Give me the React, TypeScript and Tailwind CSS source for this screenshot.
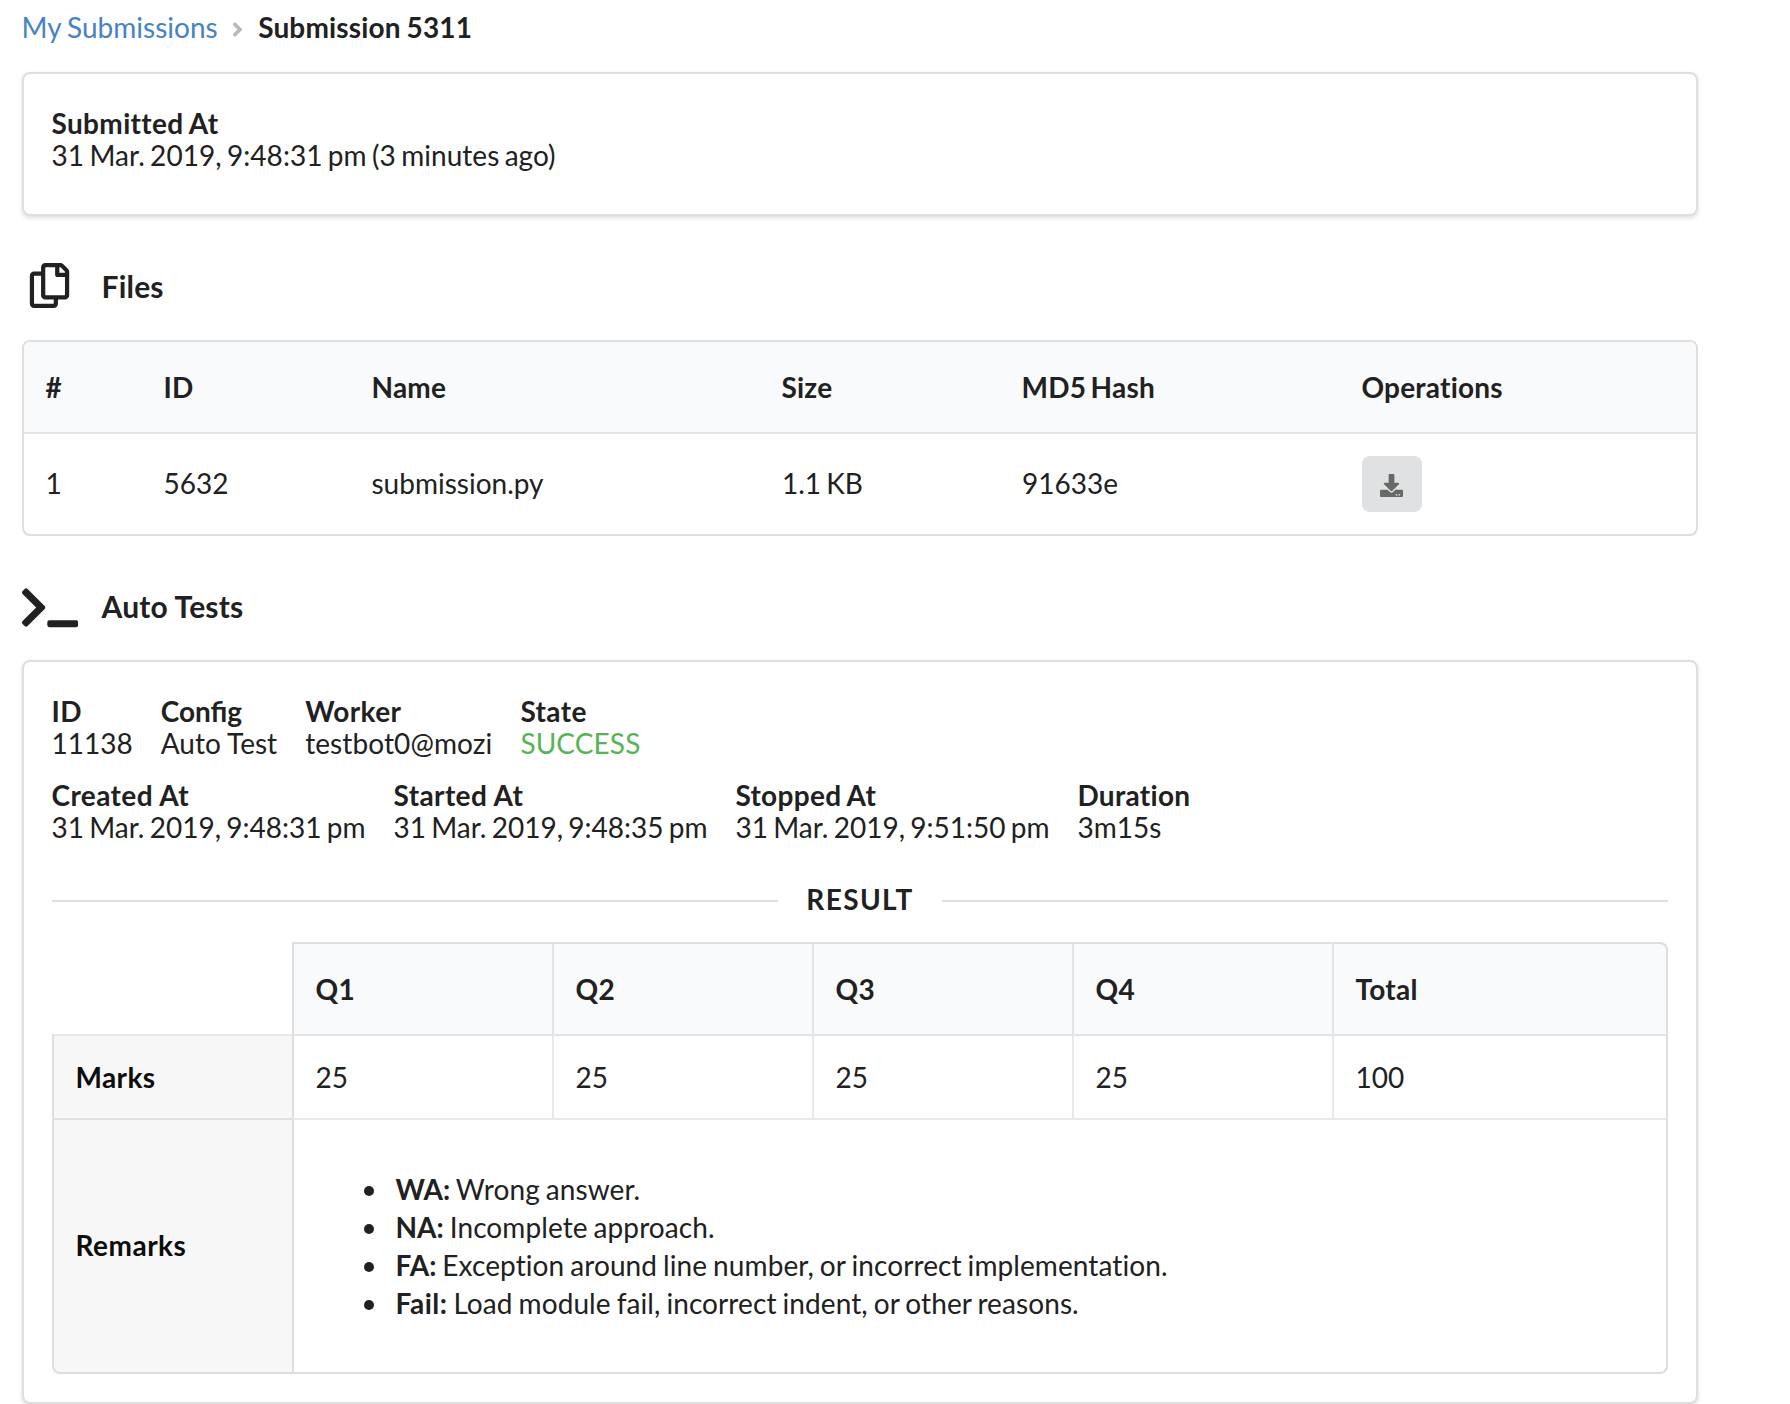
import type { ReactNode } from "react";
import { FaAngleRight, FaDownload, FaRegCopy } from "react-icons/fa";

const fileColumns = [
  { label: "#", width: "w-[120px]" },
  { label: "ID", width: "w-[208px]" },
  { label: "Name", width: "w-[410px]" },
  { label: "Size", width: "w-[240px]" },
  { label: "MD5 Hash", width: "w-[340px]" },
  { label: "Operations", width: "w-[358px]" },
];

const files = [{ index: 1, id: "5632", name: "submission.py", size: "1.1 KB", hash: "91633e" }];

const marks = [
  { label: "Q1", value: "25" },
  { label: "Q2", value: "25" },
  { label: "Q3", value: "25" },
  { label: "Q4", value: "25" },
  { label: "Total", value: "100" },
];

const remarks = [
  { code: "WA:", text: "Wrong answer." },
  { code: "NA:", text: "Incomplete approach." },
  { code: "FA:", text: "Exception around line number, or incorrect implementation." },
  { code: "Fail:", text: "Load module fail, incorrect indent, or other reasons." },
];

function TerminalIcon() {
  return (
    <svg viewBox="0 0 640 512" fill="currentColor" className="mt-[2.5px] h-[45px] w-[56.25px] shrink-0">
      <path d="M257.981 272.971L63.638 467.314c-9.373 9.373-24.569 9.373-33.941 0L7.029 444.647c-9.357-9.357-9.375-24.522-.04-33.901L161.011 256 6.99 101.255c-9.335-9.379-9.317-24.544.04-33.901l22.667-22.667c9.373-9.373 24.569-9.373 33.941 0L257.981 239.03c9.373 9.372 9.373 24.568 0 33.941zM640 456v-32c0-13.255-10.745-24-24-24H312c-13.255 0-24 10.745-24 24v32c0 13.255 10.745 24 24 24h304c13.255 0 24-10.745 24-24z" />
    </svg>
  );
}

function Field({
  label,
  children,
  labelClass = "tracking-[0.4px] [word-spacing:0px]",
  className = "",
}: {
  label: string;
  children: ReactNode;
  labelClass?: string;
  className?: string;
}) {
  return (
    <div className="whitespace-nowrap">
      <div className={`font-bold ${labelClass}`}>{label}</div>
      <div className={className}>{children}</div>
    </div>
  );
}

function Segment({ children, className }: { children: ReactNode; className: string }) {
  return (
    <section
      className={`rounded-lg border-2 border-[#dededf] bg-white px-7 pt-[33px] shadow-[0_2px_4px_0_rgba(34,36,38,0.15)] ${className}`}
    >
      {children}
    </section>
  );
}

function SectionHeader({ icon, title }: { icon: ReactNode; title: string }) {
  return (
    <h3 className="flex h-[124px] items-start pt-[46px] text-[30px] leading-[45px] font-bold">
      <span className="flex w-[57px]">{icon}</span>
      <span className="mt-[2px] ml-[22.5px] tracking-[0.2px]">{title}</span>
    </h3>
  );
}

function FilesTable() {
  return (
    <div className="h-[196px] overflow-hidden rounded-lg border-2 border-[#dededf]">
      <table className="-ml-[2px] w-[1676px] table-fixed border-separate border-spacing-0 text-left">
        <thead>
          <tr className="h-[92px] bg-[#f9fafb]">
            {fileColumns.map((column, i) => (
              <th
                key={column.label}
                className={`${column.width} border-b-2 border-[#e3e4e5] pr-[22px] font-bold tracking-[0.2px] [word-spacing:-2.5px] ${i === 0 ? "pl-[23.5px]" : "pl-[21.5px]"}`}
              >
                {column.label}
              </th>
            ))}
          </tr>
        </thead>
        <tbody>
          {files.map((file) => (
            <tr key={file.id} className="h-[100px]">
              <td className="pb-[2px] pl-[23.5px]">{file.index}</td>
              <td className="pb-[2px] pl-[21.5px]">{file.id}</td>
              <td className="pb-[2px] pl-[21.5px]">{file.name}</td>
              <td className="pb-[2px] pl-[22px] [word-spacing:-2px]">{file.size}</td>
              <td className="pb-[2px] pl-[22px]">{file.hash}</td>
              <td className="pl-[22px]">
                <button
                  aria-label="Download"
                  className="flex h-14 w-[60px] items-center justify-center rounded-lg bg-[#e0e1e2] pt-[3px] pr-[2px] text-[#676868]"
                >
                  <FaDownload className="size-[23px]" />
                </button>
              </td>
            </tr>
          ))}
        </tbody>
      </table>
    </div>
  );
}

function ResultTable() {
  return (
    <table className="w-[1616px] table-fixed border-separate border-spacing-0 text-left">
      <colgroup>
        <col className="w-[240px]" />
        <col className="w-[260px]" />
        <col className="w-[260px]" />
        <col className="w-[260px]" />
        <col className="w-[260px]" />
        <col className="w-[336px]" />
      </colgroup>
      <thead>
        <tr className="h-[92px]">
          <td />
          {marks.map((mark) => (
            <th
              key={mark.label}
              className="border-t-2 border-l-2 border-t-[#dededf] border-l-[#e3e4e5] bg-[#f9fafb] pl-[21.5px] font-bold tracking-[0.3px] first-of-type:border-l-[#dededf] last:rounded-tr-lg last:border-r-2 last:border-r-[#dededf]"
            >
              {mark.label}
            </th>
          ))}
        </tr>
      </thead>
      <tbody>
        <tr className="h-[84px]">
          <th className="border-t-2 border-l-2 border-t-[#e8e8e9] border-l-[#dededf] bg-[#f7f7f7] pl-[21.5px] font-bold tracking-[0.4px] text-[#0d0d0d]">
            Marks
          </th>
          {marks.map((mark) => (
            <td
              key={mark.label}
              className="border-t-2 border-l-2 border-t-[#e3e4e5] border-l-[#e9e9ea] pl-[21.5px] first-of-type:border-l-[#dededf] last:border-r-2 last:border-r-[#dededf]"
            >
              {mark.value}
            </td>
          ))}
        </tr>
        <tr className="h-[256px]">
          <th className="rounded-bl-lg border-t-2 border-b-2 border-l-2 border-t-[#e0e0e0] border-b-[#dededf] border-l-[#dededf] bg-[#f7f7f7] pb-[2px] pl-[21.5px] font-bold tracking-[0.5px] text-[#0d0d0d]">
            Remarks
          </th>
          <td
            colSpan={5}
            className="rounded-br-lg border-2 border-t-[#e9e9ea] border-r-[#dededf] border-b-[#dededf] border-l-[#dededf] pl-[22px]"
          >
            <ul className="pl-12 leading-[38px] tracking-[0.09px] [word-spacing:-1.3px]">
              {remarks.map((remark) => (
                <li
                  key={remark.code}
                  className="flex items-center before:mt-[4px] before:mr-[21.5px] before:size-[10px] before:rounded-full before:bg-[#212121] before:content-['']"
                >
                  <span>
                    <b className={`font-bold ${remark.code === "Fail:" ? "tracking-[0.5px]" : "tracking-normal"}`}>
                      {remark.code}
                    </b>{" "}
                    {remark.text}
                  </span>
                </li>
              ))}
            </ul>
          </td>
        </tr>
      </tbody>
    </table>
  );
}

export default function App() {
  return (
    <main className="h-[1404px] w-[1790px] overflow-hidden bg-white pl-[22px] font-['Lato',sans-serif] text-[28px] leading-8 text-[#212121] [font-variant-ligatures:none]">
      <div className="w-[1676px]">
        <nav className="flex h-[72px] items-start pt-[11px] whitespace-nowrap">
          <a href="#" className="-ml-[0.5px] text-[#4682c4] [word-spacing:-1px]">
            My Submissions
          </a>
          <FaAngleRight className="mt-[7px] ml-[8px] size-[23px] text-[#b8b8b8]" />
          <span className="ml-[9.5px] font-bold tracking-[0.15px] [word-spacing:-1px]">Submission 5311</span>
        </nav>

        <Segment className="h-36">
          <div className="-ml-[0.5px]">
            <Field
              label="Submitted At"
              labelClass="tracking-[0.35px] [word-spacing:-1px]"
              className="tracking-[0.05px] [word-spacing:-1.9px]"
            >
              31 Mar. 2019, 9:48:31 pm (3 minutes ago)
            </Field>
          </div>
        </Segment>

        <SectionHeader icon={<FaRegCopy className="mt-px ml-[4.5px] size-[45px]" />} title="Files" />
        <FilesTable />

        <SectionHeader icon={<TerminalIcon />} title="Auto Tests" />
        <Segment className="h-[744px]">
          <div className="-ml-[0.5px] flex gap-7">
            <Field label="ID">11138</Field>
            <Field label="Config" labelClass="[font-variant-ligatures:normal]">
              Auto Test
            </Field>
            <Field label="Worker" className="tracking-[0.1px]">
              testbot0@mozi
            </Field>
            <Field label="State" className="tracking-[0.1px] text-[#56b356]">
              SUCCESS
            </Field>
          </div>
          <div className="mt-5 -ml-[0.5px] flex gap-7 [word-spacing:-1.9px]">
            <Field label="Created At">31 Mar. 2019, 9:48:31 pm</Field>
            <Field label="Started At">31 Mar. 2019, 9:48:35 pm</Field>
            <Field label="Stopped At" labelClass="tracking-[0.3px] [word-spacing:-1px]">
              31 Mar. 2019, 9:51:50 pm
            </Field>
            <Field label="Duration" labelClass="tracking-[0.3px]">
              3m15s
            </Field>
          </div>
          <div className="flex h-[99px] items-start pt-10">
            <div className="mt-[17px] h-[2px] flex-1 bg-[#dededf]" />
            <h4 className="px-7 font-bold tracking-[1.4px]">RESULT</h4>
            <div className="mt-[17px] h-[2px] flex-1 bg-[#dededf]" />
          </div>
          <ResultTable />
        </Segment>
      </div>
    </main>
  );
}
